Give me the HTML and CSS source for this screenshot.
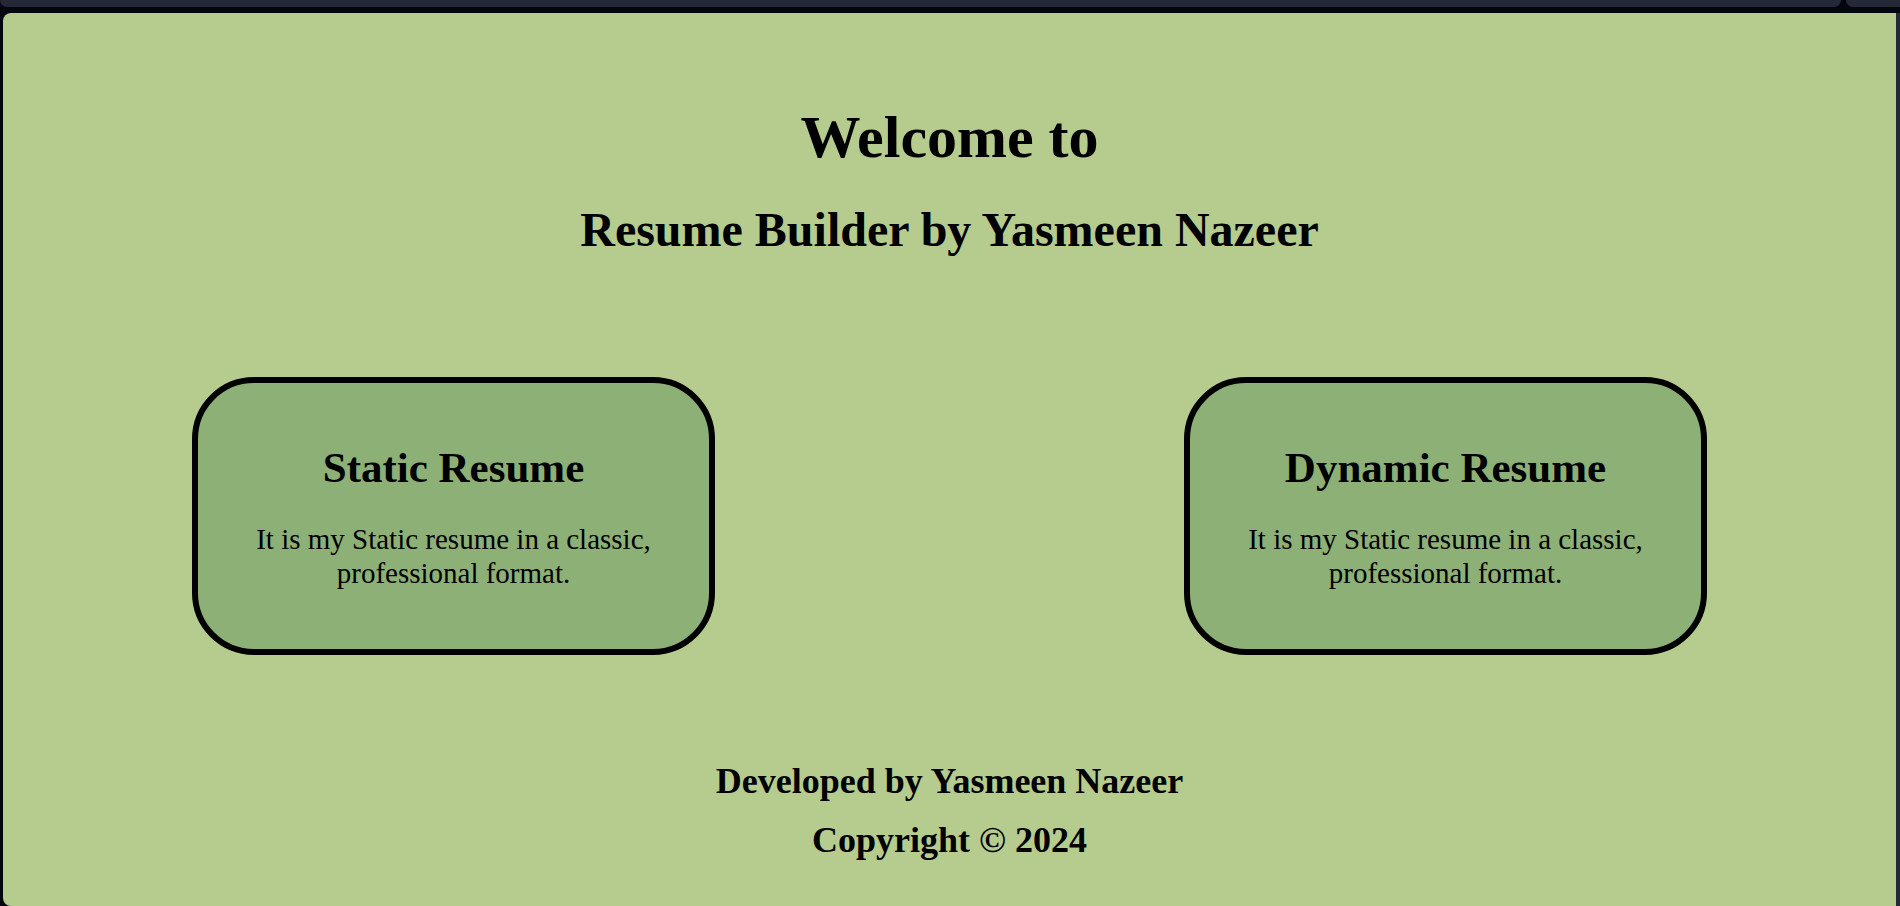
FILE: index.html
```html
<!DOCTYPE html>
<html lang="en">
<head>
<meta charset="utf-8">
<title>Resume Builder</title>
<link rel="stylesheet" href="styles.css">
</head>
<body>
<div class="frame">
  <div class="topbar">
    <div class="tab tab-main"></div>
    <div class="tab tab-side"></div>
  </div>
  <div class="row">
    <main class="panel">
      <h1 class="title">Welcome to</h1>
      <h2 class="subtitle">Resume Builder by Yasmeen Nazeer</h2>
      <section class="cards">
        <div class="card">
          <h2 class="card-title">Static Resume</h2>
          <p class="card-text">It is my Static resume in a classic, professional format.</p>
        </div>
        <div class="card">
          <h2 class="card-title">Dynamic Resume</h2>
          <p class="card-text">It is my Static resume in a classic, professional format.</p>
        </div>
      </section>
      <footer class="footer">
        <p class="footer-line">Developed by Yasmeen Nazeer</p>
        <p class="footer-line footer-copy">Copyright © 2024</p>
      </footer>
    </main>
    <div class="edge"></div>
  </div>
</div>
</body>
</html>
```

FILE: styles.css
```css
html, body {
  margin: 0;
  padding: 0;
  height: 100%;
  overflow: hidden;
}
body {
  background: #03060f;
  font-family: "Liberation Serif", "Times New Roman", serif;
  color: #000;
}
.frame {
  display: flex;
  flex-direction: column;
  height: 906px;
}
.topbar {
  display: flex;
  gap: 5px;
  height: 7px;
  margin-bottom: 6px;
}
.tab {
  background: #252836;
  border-radius: 0 0 8px 8px;
}
.tab-main {
  flex: 1;
}
.tab-side {
  width: 54px;
  border-radius: 0 0 0 8px;
}
.row {
  flex: 1;
  display: flex;
}
.panel {
  flex: 1;
  margin-left: 3px;
  background: #b5cc8e;
  border-radius: 8px 0 0 8px;
  padding-top: 88px;
  text-align: center;
}
.edge {
  width: 4px;
  background: #252836;
}
.title {
  margin: 0;
  font-size: 60px;
  line-height: 72px;
  font-weight: bold;
}
.subtitle {
  margin: 29px 0 0;
  font-size: 48px;
  line-height: 56px;
  font-weight: bold;
}
.cards {
  display: flex;
  justify-content: center;
  gap: 469px;
  margin-top: 119px;
}
.card {
  box-sizing: border-box;
  width: 523px;
  background: #8db076;
  border: 6px solid #000;
  border-radius: 62px;
  padding: 60px 40px 59px;
}
.card-title {
  margin: 0;
  font-size: 43px;
  line-height: 50px;
  font-weight: bold;
}
.card-text {
  margin: 29px 0 0;
  font-size: 29px;
  line-height: 34px;
}
.footer {
  margin-top: 106px;
}
.footer-line {
  margin: 0;
  font-size: 36px;
  line-height: 40px;
  font-weight: bold;
}
.footer-copy {
  margin-top: 19px;
}
```
